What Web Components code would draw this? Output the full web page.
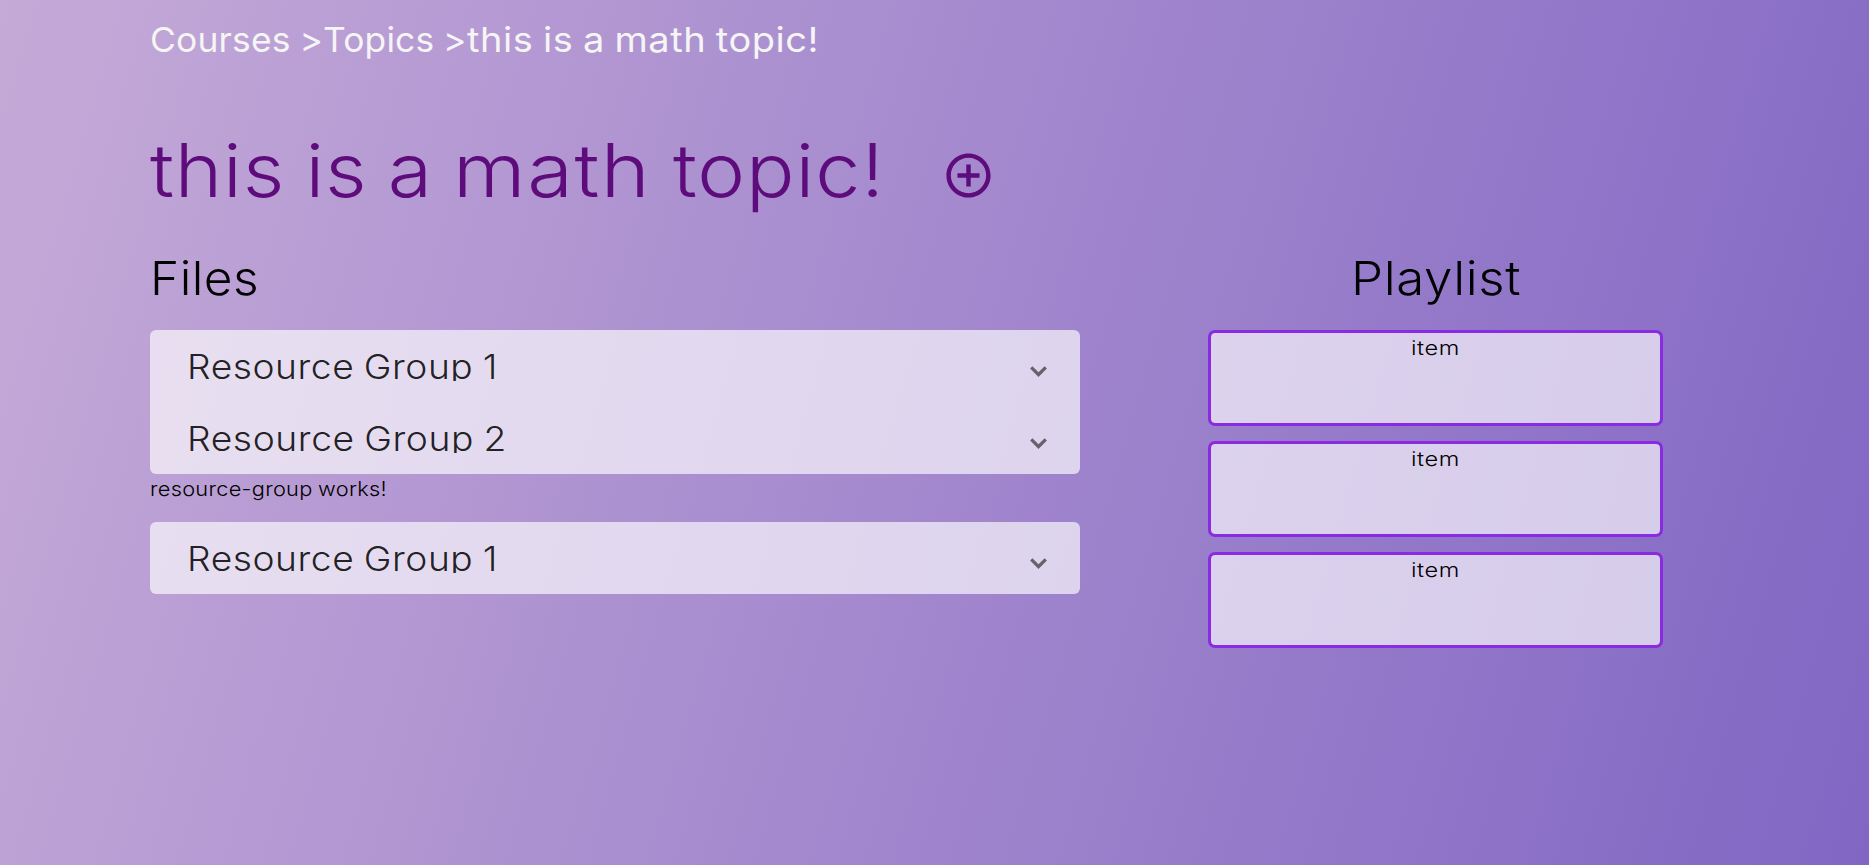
<!DOCTYPE html>
<html lang="en">
<head>
<meta charset="utf-8">
<title>Topic</title>
<style>
html, body { margin: 0; height: 100%; overflow: hidden; }
body { font-family: Inter, "Open Sans", sans-serif; font-weight: 300; color: #000; }
</style>
</head>
<body>
<topic-page></topic-page>
<script>
function define(name, html, setup) {
  const t = document.createElement('template');
  t.innerHTML = html;
  customElements.define(name, class extends HTMLElement {
    connectedCallback() {
      if (this.shadowRoot) return;
      this.attachShadow({ mode: 'open' }).append(t.content.cloneNode(true));
      if (setup) setup(this);
    }
  });
}

// Widens its glyphs a little and tracks them out so that the line takes the given width.
define('tracked-text', `<style>
:host { display: inline-block; white-space: pre; text-align: left; }
span { display: inline-block; transform-origin: 0 50%; word-spacing: -.04em; }
</style><span><slot></slot></span>`, el => {
  const want = parseFloat(el.getAttribute('width'));
  const span = el.shadowRoot.querySelector('span');
  const n = el.textContent.length;
  const natural = span.getBoundingClientRect().width;
  const stretch = 1 + (want / natural - 1) * 0.75;
  span.style.letterSpacing = ((want / stretch - natural) / n) + 'px';
  span.style.transform = 'scaleX(' + stretch + ')';
  el.style.width = want + 'px';
});

define('bread-crumbs', `<style>
:host { display: flex; height: 79px; line-height: 79px; font-size: 34.5px; font-weight: 400; color: #f5f5f5; }
</style>
<tracked-text width="173">Courses &gt;</tracked-text><tracked-text width="143.5">Topics &gt;</tracked-text><tracked-text width="352">this is a math topic!</tracked-text>`);

define('add-button', `<style>
:host { display: block; width: 53px; height: 53px; color: #5e0b7b; }
svg { display: block; width: 100%; height: 100%; }
</style>
<svg viewBox="0 0 24 24" fill="currentColor"><path d="M13 7h-2v4H7v2h4v4h2v-4h4v-2h-4V7zm-1-5C6.48 2 2 6.48 2 12s4.48 10 10 10 10-4.48 10-10S17.52 2 12 2zm0 18c-4.41 0-8-3.59-8-8s3.59-8 8-8 8 3.59 8 8-3.59 8-8 8z"/></svg>`);

define('topic-title', `<style>
:host { display: flex; align-items: center; height: 100px; margin-top: 41px; font-size: 74px; line-height: 100px; color: #5e0b7b; }
add-button { margin: 11px 0 0 57px; }
</style>
<slot></slot><add-button></add-button>`);

define('section-heading', `<style>
:host { display: block; box-sizing: border-box; height: 110px; padding-top: 6px; line-height: 104px; font-size: 46.5px; }
</style><slot></slot>`);

define('resource-panel', `<style>
:host { display: flex; height: 72px; align-items: center; justify-content: space-between; box-sizing: border-box; padding: 0 36px 0 37px; font-size: 34px; color: rgba(0,0,0,.87); }
.label { height: 30px; line-height: 32px; overflow: hidden; }
.chevron { width: 8px; height: 8px; margin: 4px 0 0 0; border: solid rgba(0,0,0,.54); border-width: 0 3px 3px 0; transform: rotate(45deg) scale(1.08); }
</style><div class="label"><slot></slot></div><div class="chevron"></div>`);

define('panel-stack', `<style>
:host { display: block; border-radius: 6px; background: rgba(255,255,255,.65); }
</style><slot></slot>`);

define('playlist-item', `<style>
:host { display: block; box-sizing: border-box; height: 96px; margin-bottom: 15px; border: 3px solid #8a2be2; border-radius: 7px; background: rgba(255,255,255,.65); background-clip: padding-box; text-align: center; font-size: 20px; line-height: 31px; }
</style><slot></slot>`);

define('topic-page', `<style>
:host { display: block; box-sizing: border-box; height: 100%; padding: 0 206px 0 150px; background: linear-gradient(106deg, #c5aad8, #8166c4); }
main { display: grid; grid-template-columns: 930px 455px; column-gap: 128px; }
.note { height: 48px; box-sizing: border-box; padding-top: 2px; font-size: 20px; line-height: 27px; }
.right { text-align: center; }
</style>
<bread-crumbs></bread-crumbs>
<topic-title><tracked-text width="303">this is a </tracked-text><tracked-text width="220">math </tracked-text><tracked-text width="212">topic!</tracked-text></topic-title>
<main>
  <section>
    <section-heading><tracked-text width="109">Files</tracked-text></section-heading>
    <panel-stack>
      <resource-panel><tracked-text width="311">Resource Group 1</tracked-text></resource-panel>
      <resource-panel><tracked-text width="320">Resource Group 2</tracked-text></resource-panel>
    </panel-stack>
    <div class="note"><tracked-text width="237">resource-group works!</tracked-text></div>
    <panel-stack>
      <resource-panel><tracked-text width="311">Resource Group 1</tracked-text></resource-panel>
    </panel-stack>
  </section>
  <section class="right">
    <section-heading><tracked-text width="170">Playlist</tracked-text></section-heading>
    <playlist-item><tracked-text width="49">item</tracked-text></playlist-item>
    <playlist-item><tracked-text width="49">item</tracked-text></playlist-item>
    <playlist-item><tracked-text width="49">item</tracked-text></playlist-item>
  </section>
</main>`);
</script>
</body>
</html>
